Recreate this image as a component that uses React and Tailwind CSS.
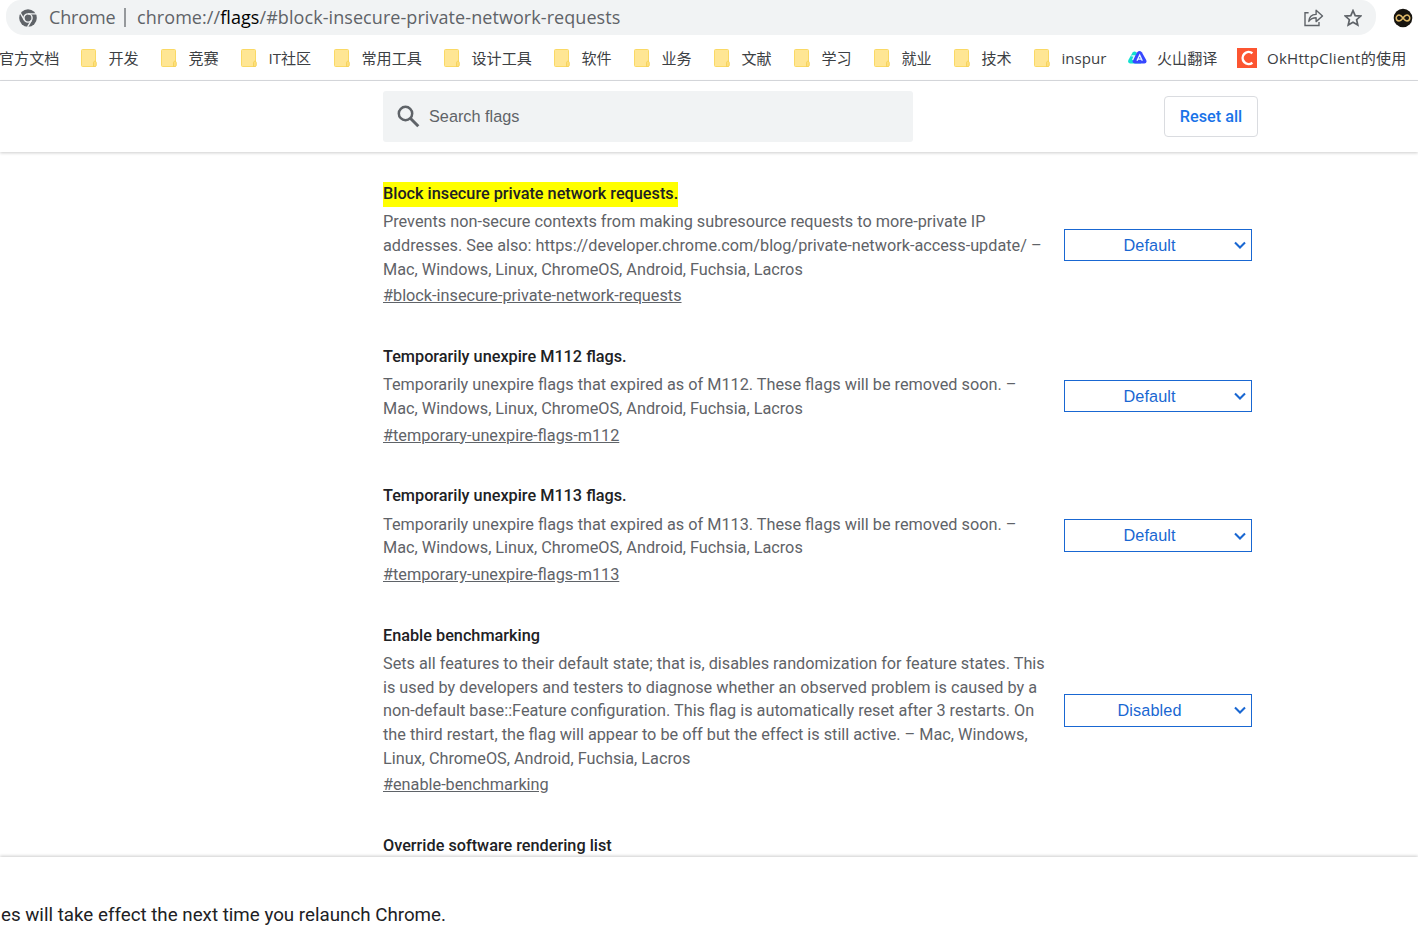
import React from 'react';

const bookmarks = [
    { label: '开发', width: 'w-[80px]' },
    { label: '竞赛', width: 'w-[80px]' },
    { label: 'IT社区', width: 'w-[93px]' },
    { label: '常用工具', width: 'w-[110px]' },
    { label: '设计工具', width: 'w-[110px]' },
    { label: '软件', width: 'w-[80px]' },
    { label: '业务', width: 'w-[80px]' },
    { label: '文献', width: 'w-[80px]' },
    { label: '学习', width: 'w-[80px]' },
    { label: '就业', width: 'w-[80px]' },
    { label: '技术', width: 'w-[80px]' },
    { label: 'inspur', width: 'w-[94px]' },
];

const flags = [
    {
        title: 'Block insecure private network requests.',
        lines: [
            'Prevents non-secure contexts from making subresource requests to more-private IP',
            'addresses. See also: https://developer.chrome.com/blog/private-network-access-update/ –',
            'Mac, Windows, Linux, ChromeOS, Android, Fuchsia, Lacros',
        ],
        link: '#block-insecure-private-network-requests',
        value: 'Default',
        highlighted: true,
    },
    {
        title: 'Temporarily unexpire M112 flags.',
        lines: [
            'Temporarily unexpire flags that expired as of M112. These flags will be removed soon. –',
            'Mac, Windows, Linux, ChromeOS, Android, Fuchsia, Lacros',
        ],
        link: '#temporary-unexpire-flags-m112',
        value: 'Default',
    },
    {
        title: 'Temporarily unexpire M113 flags.',
        lines: [
            'Temporarily unexpire flags that expired as of M113. These flags will be removed soon. –',
            'Mac, Windows, Linux, ChromeOS, Android, Fuchsia, Lacros',
        ],
        link: '#temporary-unexpire-flags-m113',
        value: 'Default',
    },
    {
        title: 'Enable benchmarking',
        lines: [
            'Sets all features to their default state; that is, disables randomization for feature states. This',
            'is used by developers and testers to diagnose whether an observed problem is caused by a',
            'non-default base::Feature configuration. This flag is automatically reset after 3 restarts. On',
            'the third restart, the flag will appear to be off but the effect is still active. – Mac, Windows,',
            'Linux, ChromeOS, Android, Fuchsia, Lacros',
        ],
        link: '#enable-benchmarking',
        value: 'Disabled',
    },
];

const FolderIcon = () => (
    <svg width="16" height="18" viewBox="0 0 16 18" className="mt-[1px] shrink-0">
        <rect x="0.5" y="0.5" width="14" height="17" rx="1" fill="#ffe694" stroke="#fad965" />
        <path d="M12.5 17.5v-3.8c0-2 2.8-2 2.8 0v2.6c0 .8-.5 1.2-1.2 1.2z" fill="#ffe07a" stroke="#f3cf55" strokeWidth="0.8" />
    </svg>
);

const ChromeIcon = () => (
    <svg width="18" height="18" viewBox="0 0 18 18" className="shrink-0">
        <circle cx="9" cy="9" r="8.8" fill="#5f6368" />
        <circle cx="9" cy="9" r="4.1" fill="none" stroke="#f1f3f4" strokeWidth="1.4" />
        <path d="M9 4.9h8.2M5.45 11.05L1.3 4M12.55 11.05L8.6 17.9" stroke="#f1f3f4" strokeWidth="1.4" fill="none" />
    </svg>
);

const ShareIcon = () => (
    <svg width="20" height="18" viewBox="0 0 20 18" fill="none" stroke="#5f6368" strokeWidth="1.4">
        <path d="M4.6 3.7H1v12.8h14v-3.4" />
        <path d="M4.8 12.4c.3-4.5 3-6.8 7.3-7V1.3l6.4 5.7-6.4 5.6V8.8c-3.2 0-5.4 1-7.3 3.6z" strokeLinejoin="round" />
    </svg>
);

const StarIcon = () => (
    <svg width="18" height="18" viewBox="0 0 18 18" fill="none" stroke="#5f6368" strokeWidth="1.7">
        <path d="M9 1.6l2.2 5 5.5.5-4.1 3.6 1.2 5.4L9 13.3l-4.8 2.8 1.2-5.4-4.1-3.6 5.5-.5z" />
    </svg>
);

const InfinityIcon = () => (
    <svg width="20" height="20" viewBox="0 0 20 20">
        <circle cx="10" cy="10" r="9.3" fill="#17140f" />
        <path d="M10 10C8.3 7.7 7.2 7.1 6.1 7.1a2.9 2.9 0 0 0 0 5.8c1.1 0 2.2-.6 3.9-2.9s2.8-2.9 3.9-2.9a2.9 2.9 0 0 1 0 5.8c-1.1 0-2.2-.6-3.9-2.9z" fill="none" stroke="#dfb968" strokeWidth="1.5" />
    </svg>
);

const VolcanoIcon = () => (
    <svg width="19" height="13" viewBox="0 0 19 13" className="mt-[1px] shrink-0">
        <path d="M4.6 1.5Q6.6-.7 8.4 1.5L13 12.5H2Q-.6 12 .4 9z" fill="#12e0d0" />
        <path d="M9.2 1.3Q11.5-1.3 13.8 1.3l4.5 8q.9 2.8-2 3.3H6.8q-3-.5-2-3.3z" fill="#3747ff" />
        <path d="M3.4 4.8h3L4.6 9M9 9.8L11.7 4l2.6 5.8M10 8.1h3.3" fill="none" stroke="#e7f6ff" strokeWidth="1.3" />
    </svg>
);

const Toolbar = () => (
    <div className="flex h-[35px] items-center pl-[6px]">
        <div className="flex h-[35px] w-[1370px] items-center rounded-b-[18px] rounded-t-[15px] bg-[#f1f3f4] pl-[13px] pr-[14px] text-[18px] text-[#5f6368]">
            <ChromeIcon />
            <span className="ml-[12px] w-[75px] tracking-[-0.15px]">Chrome</span>
            <span className="h-[19px] w-[2px] bg-[#96999c]" />
            <span className="ml-[11px] flex-1 whitespace-nowrap tracking-[0.07px]">
                chrome://<span className="text-black">flags</span>/#block-insecure-private-network-requests
            </span>
            <ShareIcon />
            <span className="ml-[20px]"><StarIcon /></span>
        </div>
        <span className="ml-[17px] shrink-0"><InfinityIcon /></span>
    </div>
);

const BookmarkBar = () => (
    <div className="flex h-[46px] items-center whitespace-nowrap border-b border-[#dadce0] text-[15.1px] text-[#3c4043]">
        <span className="-ml-[1px] w-[82px] shrink-0 pt-[1px]">官方文档</span>
        {bookmarks.map((b) => (
            <div key={b.label} className={`flex shrink-0 items-center gap-[11.5px] ${b.width}`}>
                <FolderIcon />
                <span className="pt-[1px]">{b.label}</span>
            </div>
        ))}
        <div className="flex w-[109px] shrink-0 items-center gap-[10px]">
            <VolcanoIcon />
            <span className="pt-[1px]">火山翻译</span>
        </div>
        <div className="flex shrink-0 items-center gap-[10px]">
            <svg width="20" height="20" viewBox="0 0 20 20" className="mt-[1px]">
                <rect width="20" height="20" fill="#fc5531" />
                <path d="M15.4 5.3A6 6 0 1 0 15.4 14.7" fill="none" stroke="#fff" strokeWidth="2.5" />
            </svg>
            <span className="pt-[1px] tracking-[0.22px]">OkHttpClient的使用</span>
        </div>
    </div>
);

const FlagTitle = ({ children, highlighted }) => (
    <h3 className="mb-[3.4px] flex h-[25px] text-[16.25px] font-medium leading-[23px] text-[#202124]">
        <span className={highlighted ? 'bg-[#ffff00]' : ''}>{children}</span>
    </h3>
);

const FlagRow = ({ flag }) => (
    <div className="mb-[37.2px] flex items-center">
        <div className="w-[681px] shrink-0 whitespace-nowrap text-[16.25px] leading-[23.56px] text-[#5f6368]">
            <FlagTitle highlighted={flag.highlighted}>{flag.title}</FlagTitle>
            {flag.lines.map((line) => (
                <p key={line}>{line}</p>
            ))}
            <a className="mt-[3.2px] block underline">{flag.link}</a>
        </div>
        <div className="flex h-[32.5px] w-[188px] items-center border border-[#1967d2] pr-[5px] font-['Liberation_Sans',sans-serif] text-[16.25px] tracking-[0.1px] text-[#1967d2]">
            <span className="flex-1 text-center">{flag.value}</span>
            <svg width="12" height="8" viewBox="0 0 12 8" fill="none" stroke="#1967d2" strokeWidth="2.1">
                <path d="M1 1.6l5 4.9 5-4.9" />
            </svg>
        </div>
    </div>
);

export default function App() {
    return (
        <div className="flex h-[938px] w-[1418px] flex-col overflow-hidden bg-white font-[Roboto,sans-serif]">
            <div className="shrink-0 font-['Open_Sans','Noto_Sans_CJK_SC',sans-serif]">
                <Toolbar />
                <BookmarkBar />
            </div>

            {/* Search header */}
            <header className="z-10 flex h-[71px] shrink-0 items-center pl-[383px] shadow-[0_1px_3px_rgba(0,0,0,0.2)]">
                <div className="flex h-[51px] w-[530px] items-center rounded-[3px] bg-[#f1f3f4] pl-[14px] font-['Liberation_Sans',sans-serif] text-[16.25px] text-[#5f6368]">
                    <svg width="23" height="23" viewBox="0 0 23 23" fill="none" stroke="#5f6368" strokeWidth="2.5">
                        <circle cx="8.5" cy="8.5" r="6.7" />
                        <path d="M13.3 13.3l8 8" strokeWidth="3" />
                    </svg>
                    <span className="ml-[9px]">Search flags</span>
                </div>
                <button className="ml-[251px] h-[41px] w-[94px] rounded-[4px] border border-[#dadce0] pt-[1px] text-[16.25px] font-medium text-[#1a73e8]">
                    Reset all
                </button>
            </header>

            <main className="min-h-0 flex-1 overflow-hidden pl-[383px] pt-[30px]">
                {flags.map((flag) => (
                    <FlagRow key={flag.link} flag={flag} />
                ))}
                <FlagTitle>Override software rendering list</FlagTitle>
            </main>

            {/* Relaunch notice */}
            <footer className="z-10 h-[81px] shrink-0 bg-white pl-[1px] pt-[45px] text-[18.75px] leading-[27px] text-[#202124] shadow-[0_-1px_3px_rgba(0,0,0,0.2)]">
                es will take effect the next time you relaunch Chrome.
            </footer>
        </div>
    );
}
